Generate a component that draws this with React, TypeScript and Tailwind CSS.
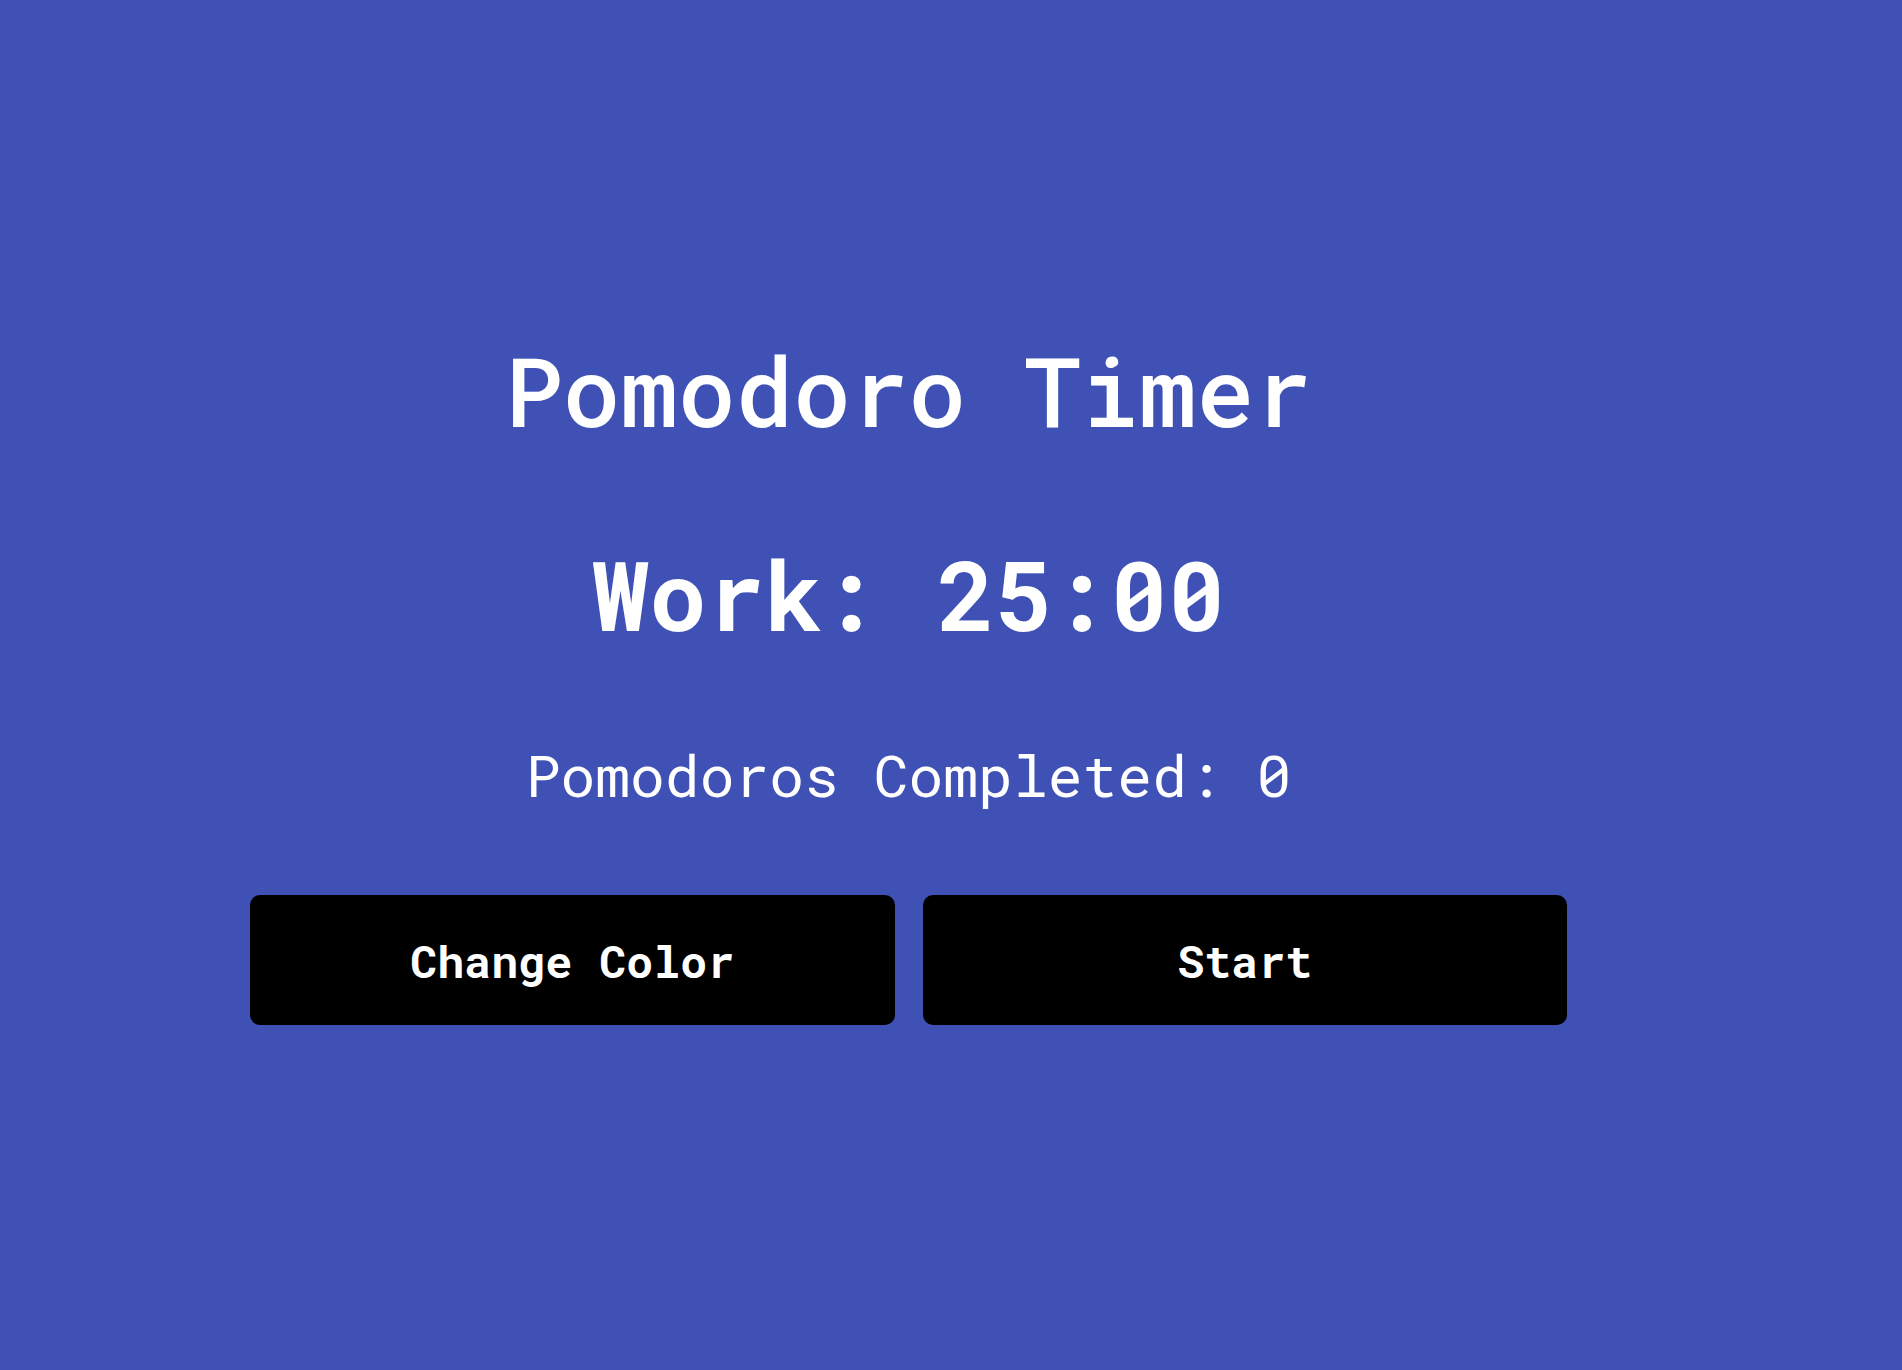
export default function App() {
  return (
    <div
      className="min-h-[1370px] w-full bg-[#3f51b5] text-white"
      style={{ fontFamily: '"Roboto Mono", "DejaVu Sans Mono", "Liberation Mono", monospace' }}
    >
      <div className="ml-[250px] flex w-[1317px] flex-col items-center pt-[342px]">
        {/* Title */}
        <h1 className="text-[96px] font-medium leading-none">Pomodoro Timer</h1>

        {/* Timer */}
        <div className="mt-[108px] text-[96px] font-bold leading-none">Work: 25:00</div>

        {/* Counter */}
        <p className="mt-[104px] text-[58px] leading-none">Pomodoros Completed: 0</p>

        {/* Actions */}
        <div className="mt-[91px] grid w-full grid-cols-2 gap-[28px]">
          <button className="flex h-[130px] items-center justify-center rounded-[10px] bg-black text-[45px] font-bold leading-none text-white">
            Change Color
          </button>
          <button className="flex h-[130px] items-center justify-center rounded-[10px] bg-black text-[45px] font-bold leading-none text-white">
            Start
          </button>
        </div>
      </div>
    </div>
  )
}
